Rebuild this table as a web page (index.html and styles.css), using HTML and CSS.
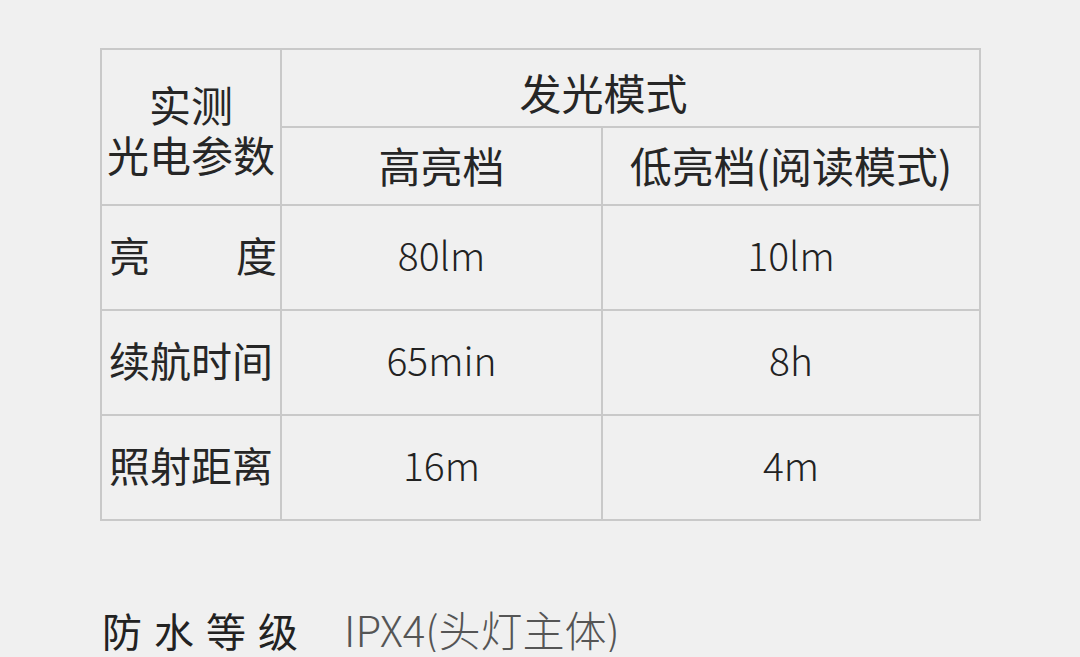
FILE: index.html
```html
<!DOCTYPE html>
<html lang="zh-CN">
<head>
<meta charset="utf-8">
<link rel="stylesheet" href="styles.css">
</head>
<body>
<div class="page">
  <table class="spec">
    <colgroup>
      <col class="c1"><col class="c2"><col class="c3">
    </colgroup>
    <tr class="h1">
      <th rowspan="2" class="param"><span class="pline">实测</span><span class="pline">光电参数</span></th>
      <th colspan="2" class="mode">发光模式</th>
    </tr>
    <tr class="h2">
      <th class="sub">高亮档</th>
      <th class="sub">低亮档(阅读模式)</th>
    </tr>
    <tr class="r">
      <th class="label"><span class="just"><span>亮</span><span>度</span></span></th>
      <td>80lm</td>
      <td>10lm</td>
    </tr>
    <tr class="r">
      <th class="label">续航时间</th>
      <td>65min</td>
      <td>8h</td>
    </tr>
    <tr class="r">
      <th class="label">照射距离</th>
      <td>16m</td>
      <td>4m</td>
    </tr>
  </table>
  <div class="rating">
    <span class="rating-key">防水等级</span>
    <span class="rating-val">IPX4(头灯主体)</span>
  </div>
</div>
</body>
</html>
```
FILE: styles.css
```css
html, body {
  margin: 0;
  padding: 0;
  background: #f0f0f0;
}
body {
  font-family: "Noto Sans CJK SC", "Noto Sans", sans-serif;
  color: #262626;
}
.page {
  padding: 48px 0 0 100px;
}
.spec {
  border-collapse: collapse;
  table-layout: fixed;
  width: 879px;
}
.c1 { width: 180px; }
.c2 { width: 321px; }
.c3 { width: 378px; }
.spec th, .spec td {
  border: 2px solid #c9c9c9;
  padding: 0;
  text-align: center;
  vertical-align: middle;
  font-size: 42px;
  font-weight: 400;
  line-height: 50px;
  white-space: nowrap;
}
.spec td {
  font-size: 39px;
  font-weight: 300;
  color: #222;
  padding-bottom: 8px;
}
.h1 { height: 78px; }
.h2 { height: 78px; }
.mode { padding: 8px 54px 0 0 !important; }
.sub { padding-bottom: 2px !important; }
.param { padding-top: 4px !important; }
.pline {
  display: block;
  height: 50px;
  line-height: 50px;
}
.r { height: 105px; }
.label {
  text-align: left !important;
  font-size: 41px !important;
  padding: 0 0 8px 7px !important;
  letter-spacing: 0;
}
.just {
  display: flex;
  justify-content: space-between;
  padding-right: 3px;
}
.rating {
  margin-top: 86px;
  display: flex;
  align-items: baseline;
  line-height: 44px;
}
.rating-key {
  font-size: 40px;
  letter-spacing: 12px;
  color: #222;
  padding-left: 2px;
  width: 242px;
}
.rating-val {
  font-size: 42px;
  font-weight: 300;
  color: #555;
}
```
